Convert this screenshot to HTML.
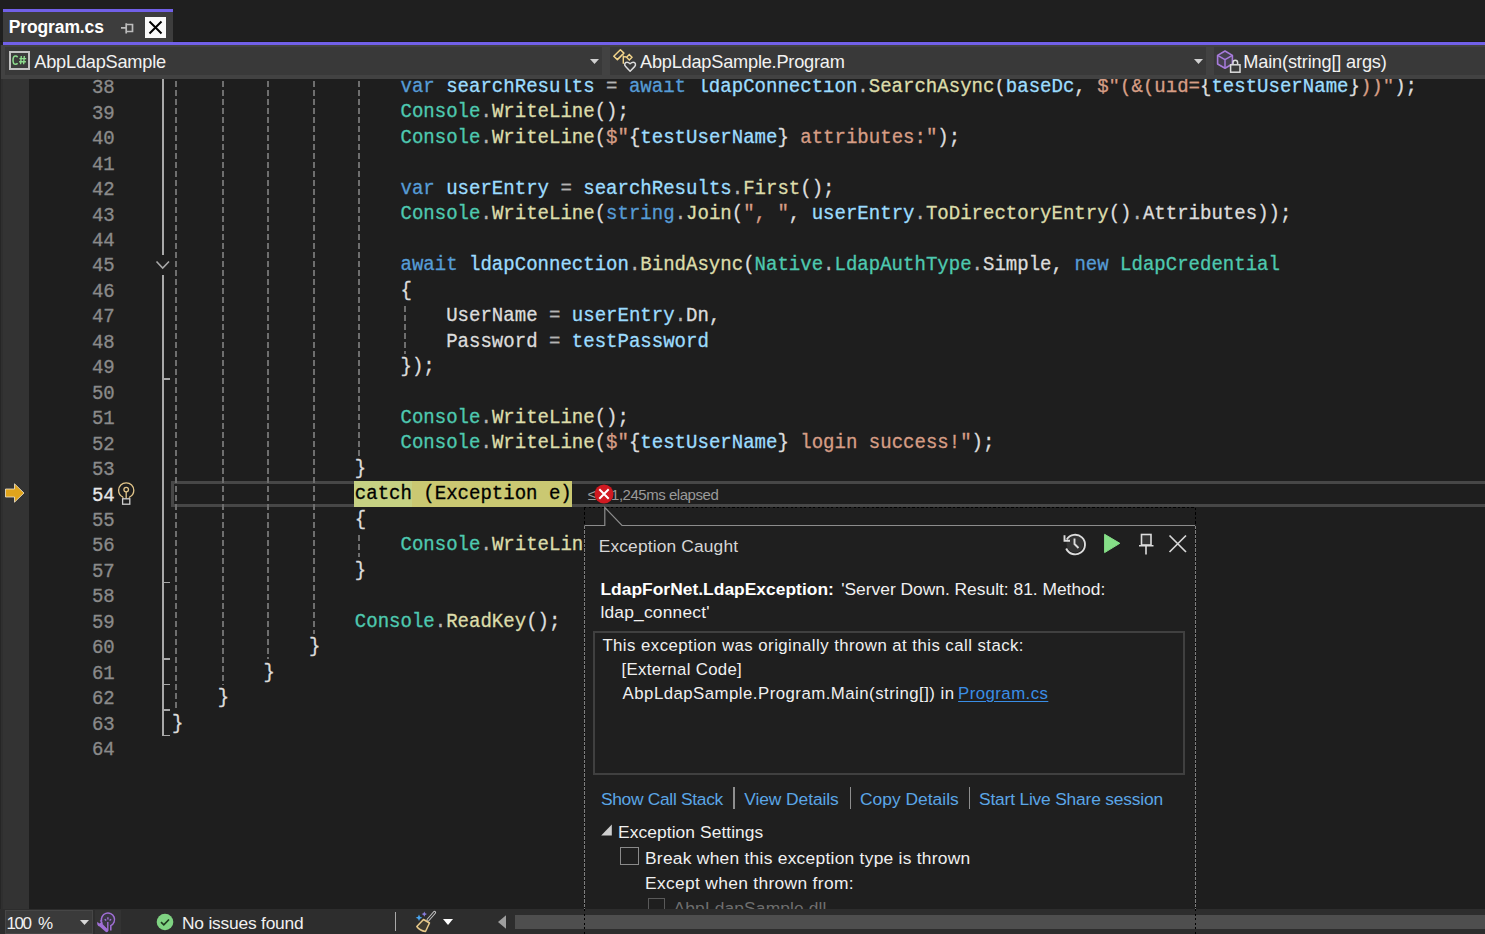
<!DOCTYPE html><html><head><meta charset="utf-8"><style>
html,body{margin:0;padding:0;width:1485px;height:934px;overflow:hidden;background:#1f1f1f;}
.r{position:absolute;}
.t{position:absolute;white-space:pre;font-family:"Liberation Sans",sans-serif;}
.m{position:absolute;white-space:pre;font-family:"Liberation Mono",monospace;transform:scaleY(1.04);transform-origin:0 14.60px;-webkit-text-stroke:0.3px currentColor}
svg{position:absolute;overflow:visible;}
</style></head><body>
<div class="r" style="left:0px;top:41px;width:1485px;height:1px;background:#19191a;"></div>
<div class="r" style="left:3px;top:9px;width:170px;height:3px;background:#7160e8;"></div>
<div class="r" style="left:3px;top:12px;width:170px;height:30px;background:#3d3d3d;"></div>
<div class="r" style="left:3px;top:42px;width:1482px;height:3px;background:#7160e8;"></div>
<div class="t" style="left:8.70px;top:19.19px;font-size:17.5px;line-height:17.5px;color:#ffffff;font-weight:bold;letter-spacing:-0.118px;">Program.cs</div>
<svg style="left:118px;top:20px" width="18" height="18" viewBox="0 0 18 18"><path d="M3 7.8H8M8.2 3.2V13.5M8.2 4.5H14.5V11.5H8.2" fill="none" stroke="#bcbcbc" stroke-width="1.7"/></svg>
<div class="r" style="left:145px;top:17px;width:21px;height:21px;background:#fafafa;"></div>
<svg style="left:145px;top:17px" width="21" height="21" viewBox="0 0 21 21"><path d="M4.5 4.5L16.5 16.5M16.5 4.5L4.5 16.5" stroke="#000" stroke-width="2"/></svg>
<div class="r" style="left:1px;top:45px;width:1484px;height:34px;background:#424242;"></div>
<div class="r" style="left:5px;top:47px;width:597px;height:28px;background:#393939;"></div>
<div class="r" style="left:610px;top:47px;width:596px;height:28px;background:#393939;"></div>
<div class="r" style="left:1214px;top:47px;width:271px;height:28px;background:#393939;"></div>
<div class="r" style="left:9px;top:51px;width:17px;height:15px;border:2px solid #c2c2c2;background:#3b3b3b"></div>
<svg style="left:9px;top:51px" width="21" height="19" viewBox="0 0 21 19"><path d="M8.6 6.2C8.1 5.5 7.4 5.1 6.6 5.1C5.1 5.1 4 6.6 4 9.2C4 11.8 5.1 13.3 6.6 13.3C7.4 13.3 8.1 12.9 8.6 12.2" fill="none" stroke="#8ddc8d" stroke-width="1.5"/><path d="M12.3 5L11.6 13.3M15.3 5L14.6 13.3M10.4 7.6H17.2M10.1 10.8H16.9" fill="none" stroke="#8ddc8d" stroke-width="1.4"/></svg>
<div class="t" style="left:34.30px;top:53.39px;font-size:18.2px;line-height:18.2px;color:#f2f2f2;font-weight:normal;letter-spacing:-0.223px;">AbpLdapSample</div>
<svg style="left:590.0px;top:58.5px" width="9" height="5" viewBox="0 0 9 5"><path d="M0 0H9L4.5 5Z" fill="#d0d0d0"/></svg>
<svg style="left:610px;top:45px" width="30" height="30" viewBox="0 0 30 30"><path d="M3.8 11.2L10.4 4.8L13.9 8.1L7.4 14.6Z" fill="none" stroke="#f2d48a" stroke-width="1.5" stroke-linejoin="round"/><path d="M13.2 11.8H16.5" stroke="#f2d48a" stroke-width="1.4"/><path d="M16.6 12.2L19.3 9.5L22 12.2L19.3 14.9Z" fill="none" stroke="#f2d48a" stroke-width="1.4"/><path d="M13.3 10.5V18.7" stroke="#f2d48a" stroke-width="1.4"/><path d="M20.1 26.2L15.6 21.6C14 20 14.6 17.2 17 17.2C18.4 17.2 20.1 18.8 20.1 18.8C20.1 18.8 21.8 17.2 23.2 17.2C25.6 17.2 26.2 20 24.6 21.6Z" fill="#3a3a3a" stroke="#dcdcdc" stroke-width="1.5" stroke-linejoin="round"/></svg>
<div class="t" style="left:640.00px;top:53.29px;font-size:18.2px;line-height:18.2px;color:#f2f2f2;font-weight:normal;letter-spacing:-0.222px;">AbpLdapSample.Program</div>
<svg style="left:1194.1px;top:58.5px" width="9" height="5" viewBox="0 0 9 5"><path d="M0 0H9L4.5 5Z" fill="#d0d0d0"/></svg>
<svg style="left:1210px;top:45px" width="32" height="30" viewBox="0 0 32 30"><path d="M15 6L7.6 10.4V19L15 23.2L22.4 19V10.4Z" fill="#45404f" stroke="#a77bdb" stroke-width="1.6" stroke-linejoin="round"/><path d="M7.6 10.4L15 14.6L22.4 10.4M15 14.6V23.2" fill="none" stroke="#a77bdb" stroke-width="1.5"/><rect x="20.6" y="19.8" width="9.4" height="7.4" fill="#3a3a3a" stroke="#dcdcdc" stroke-width="1.5"/><path d="M23 19.8V17.5C23 14.4 27.6 14.4 27.6 17.5V19.8" fill="none" stroke="#dcdcdc" stroke-width="1.5"/></svg>
<div class="t" style="left:1243.30px;top:52.79px;font-size:18.2px;line-height:18.2px;color:#f2f2f2;font-weight:normal;letter-spacing:-0.166px;">Main(string[] args)</div>
<div class="r" style="left:0px;top:45px;width:1px;height:1485px;background:#262626;"></div>
<div class="r" style="left:1px;top:79px;width:2px;height:830px;background:#2f2f2f;"></div>
<div class="r" style="left:3px;top:79px;width:26px;height:830px;background:#333333;"></div>
<div class="r" style="left:29px;top:79px;width:1456px;height:830px;background:#1e1e1e;"></div>
<div class="r" style="left:29px;top:79px;width:1456px;height:830px;overflow:hidden">
<div class="r" style="left:141.5px;top:402px;width:1319.5px;height:26px;background:transparent;border:3px solid #474747;box-sizing:border-box"></div>
<div class="r" style="left:325.2px;top:402px;width:58px;height:26px;background:#c6d183;"></div>
<div class="r" style="left:383.2px;top:402px;width:160px;height:26px;background:#cac872;"></div>
<div class="r" style="left:146px;top:2px;width:2px;height:629.1px;background:transparent;background:repeating-linear-gradient(to bottom,#6e6e6e 0,#6e6e6e 6px,transparent 6px,transparent 9px)"></div>
<div class="r" style="left:193px;top:2px;width:2px;height:603.6px;background:transparent;background:repeating-linear-gradient(to bottom,#6e6e6e 0,#6e6e6e 6px,transparent 6px,transparent 9px)"></div>
<div class="r" style="left:238px;top:2px;width:2px;height:578.2px;background:transparent;background:repeating-linear-gradient(to bottom,#6e6e6e 0,#6e6e6e 6px,transparent 6px,transparent 9px)"></div>
<div class="r" style="left:284px;top:2px;width:2px;height:552.7px;background:transparent;background:repeating-linear-gradient(to bottom,#6e6e6e 0,#6e6e6e 6px,transparent 6px,transparent 9px)"></div>
<div class="r" style="left:329px;top:2px;width:2px;height:374.5px;background:transparent;background:repeating-linear-gradient(to bottom,#6e6e6e 0,#6e6e6e 6px,transparent 6px,transparent 9px)"></div>
<div class="r" style="left:329px;top:456px;width:2px;height:22.3px;background:transparent;background:repeating-linear-gradient(to bottom,#6e6e6e 0,#6e6e6e 6px,transparent 6px,transparent 9px)"></div>
<div class="r" style="left:375px;top:227px;width:2px;height:47.7px;background:transparent;background:repeating-linear-gradient(to bottom,#6e6e6e 0,#6e6e6e 6px,transparent 6px,transparent 9px)"></div>
<div class="r" style="left:133px;top:0px;width:2px;height:176px;background:#a8a8a8;"></div>
<div class="r" style="left:133px;top:196px;width:2px;height:460.56000000000006px;background:#a8a8a8;"></div>
<div class="r" style="left:133px;top:299.1px;width:8px;height:1.5px;background:#a8a8a8;"></div>
<div class="r" style="left:133px;top:502.8px;width:8px;height:1.5px;background:#a8a8a8;"></div>
<div class="r" style="left:133px;top:579.2px;width:8px;height:1.5px;background:#a8a8a8;"></div>
<div class="r" style="left:133px;top:604.6px;width:8px;height:1.5px;background:#a8a8a8;"></div>
<div class="r" style="left:133px;top:630.1px;width:8px;height:1.5px;background:#a8a8a8;"></div>
<div class="r" style="left:133px;top:655.6px;width:8px;height:1.5px;background:#a8a8a8;"></div>
<svg style="left:127px;top:181px" width="14" height="10" viewBox="0 0 14 10"><path d="M0.5 1.5L6.7 8L13 1.5" fill="none" stroke="#a8a8a8" stroke-width="1.6"/></svg>
<div class="m" style="left:371.50px;top:-1.00px;font-size:19.0417px;line-height:19.0417px"><span style="color:#569CD6">var</span><span style="color:#DCDCDC"> </span><span style="color:#9CDCFE">searchResults</span><span style="color:#B4B4B4"> = </span><span style="color:#569CD6">await</span><span style="color:#DCDCDC"> </span><span style="color:#9CDCFE">ldapConnection</span><span style="color:#B4B4B4">.</span><span style="color:#DCDCAA">SearchAsync</span><span style="color:#DCDCDC">(</span><span style="color:#9CDCFE">baseDc</span><span style="color:#DCDCDC">, </span><span style="color:#D69D85">$"(&amp;(uid=</span><span style="color:#DCDCDC">{</span><span style="color:#9CDCFE">testUserName</span><span style="color:#DCDCDC">}</span><span style="color:#D69D85">))"</span><span style="color:#DCDCDC">);</span></div>
<div class="m" style="left:371.50px;top:24.46px;font-size:19.0417px;line-height:19.0417px"><span style="color:#4EC9B0">Console</span><span style="color:#B4B4B4">.</span><span style="color:#DCDCAA">WriteLine</span><span style="color:#DCDCDC">();</span></div>
<div class="m" style="left:371.50px;top:49.92px;font-size:19.0417px;line-height:19.0417px"><span style="color:#4EC9B0">Console</span><span style="color:#B4B4B4">.</span><span style="color:#DCDCAA">WriteLine</span><span style="color:#DCDCDC">(</span><span style="color:#D69D85">$"</span><span style="color:#DCDCDC">{</span><span style="color:#9CDCFE">testUserName</span><span style="color:#DCDCDC">}</span><span style="color:#D69D85"> attributes:"</span><span style="color:#DCDCDC">);</span></div>
<div class="m" style="left:371.50px;top:100.84px;font-size:19.0417px;line-height:19.0417px"><span style="color:#569CD6">var</span><span style="color:#DCDCDC"> </span><span style="color:#9CDCFE">userEntry</span><span style="color:#B4B4B4"> = </span><span style="color:#9CDCFE">searchResults</span><span style="color:#B4B4B4">.</span><span style="color:#DCDCAA">First</span><span style="color:#DCDCDC">();</span></div>
<div class="m" style="left:371.50px;top:126.30px;font-size:19.0417px;line-height:19.0417px"><span style="color:#4EC9B0">Console</span><span style="color:#B4B4B4">.</span><span style="color:#DCDCAA">WriteLine</span><span style="color:#DCDCDC">(</span><span style="color:#569CD6">string</span><span style="color:#B4B4B4">.</span><span style="color:#DCDCAA">Join</span><span style="color:#DCDCDC">(</span><span style="color:#D69D85">", "</span><span style="color:#DCDCDC">, </span><span style="color:#9CDCFE">userEntry</span><span style="color:#B4B4B4">.</span><span style="color:#DCDCAA">ToDirectoryEntry</span><span style="color:#DCDCDC">()</span><span style="color:#B4B4B4">.</span><span style="color:#DCDCDC">Attributes</span><span style="color:#DCDCDC">));</span></div>
<div class="m" style="left:371.50px;top:177.22px;font-size:19.0417px;line-height:19.0417px"><span style="color:#569CD6">await</span><span style="color:#DCDCDC"> </span><span style="color:#9CDCFE">ldapConnection</span><span style="color:#B4B4B4">.</span><span style="color:#DCDCAA">BindAsync</span><span style="color:#DCDCDC">(</span><span style="color:#4EC9B0">Native</span><span style="color:#B4B4B4">.</span><span style="color:#4EC9B0">LdapAuthType</span><span style="color:#B4B4B4">.</span><span style="color:#DCDCDC">Simple</span><span style="color:#DCDCDC">, </span><span style="color:#569CD6">new</span><span style="color:#DCDCDC"> </span><span style="color:#4EC9B0">LdapCredential</span></div>
<div class="m" style="left:371.50px;top:202.68px;font-size:19.0417px;line-height:19.0417px"><span style="color:#DCDCDC">{</span></div>
<div class="m" style="left:417.20px;top:228.14px;font-size:19.0417px;line-height:19.0417px"><span style="color:#DCDCDC">UserName</span><span style="color:#B4B4B4"> = </span><span style="color:#9CDCFE">userEntry</span><span style="color:#B4B4B4">.</span><span style="color:#DCDCDC">Dn</span><span style="color:#DCDCDC">,</span></div>
<div class="m" style="left:417.20px;top:253.60px;font-size:19.0417px;line-height:19.0417px"><span style="color:#DCDCDC">Password</span><span style="color:#B4B4B4"> = </span><span style="color:#9CDCFE">testPassword</span></div>
<div class="m" style="left:371.50px;top:279.06px;font-size:19.0417px;line-height:19.0417px"><span style="color:#DCDCDC">});</span></div>
<div class="m" style="left:371.50px;top:329.98px;font-size:19.0417px;line-height:19.0417px"><span style="color:#4EC9B0">Console</span><span style="color:#B4B4B4">.</span><span style="color:#DCDCAA">WriteLine</span><span style="color:#DCDCDC">();</span></div>
<div class="m" style="left:371.50px;top:355.44px;font-size:19.0417px;line-height:19.0417px"><span style="color:#4EC9B0">Console</span><span style="color:#B4B4B4">.</span><span style="color:#DCDCAA">WriteLine</span><span style="color:#DCDCDC">(</span><span style="color:#D69D85">$"</span><span style="color:#DCDCDC">{</span><span style="color:#9CDCFE">testUserName</span><span style="color:#DCDCDC">}</span><span style="color:#D69D85"> login success!"</span><span style="color:#DCDCDC">);</span></div>
<div class="m" style="left:325.80px;top:380.90px;font-size:19.0417px;line-height:19.0417px"><span style="color:#DCDCDC">}</span></div>
<div class="m" style="left:325.80px;top:406.36px;font-size:19.0417px;line-height:19.0417px"><span style="color:#000">catch</span><span style="color:#000"> (Exception e)</span></div>
<div class="m" style="left:325.80px;top:431.82px;font-size:19.0417px;line-height:19.0417px"><span style="color:#DCDCDC">{</span></div>
<div class="m" style="left:371.50px;top:457.28px;font-size:19.0417px;line-height:19.0417px"><span style="color:#4EC9B0">Console</span><span style="color:#B4B4B4">.</span><span style="color:#DCDCAA">WriteLin</span></div>
<div class="m" style="left:325.80px;top:482.74px;font-size:19.0417px;line-height:19.0417px"><span style="color:#DCDCDC">}</span></div>
<div class="m" style="left:325.80px;top:533.66px;font-size:19.0417px;line-height:19.0417px"><span style="color:#4EC9B0">Console</span><span style="color:#B4B4B4">.</span><span style="color:#DCDCAA">ReadKey</span><span style="color:#DCDCDC">();</span></div>
<div class="m" style="left:280.10px;top:559.12px;font-size:19.0417px;line-height:19.0417px"><span style="color:#DCDCDC">}</span></div>
<div class="m" style="left:234.40px;top:584.58px;font-size:19.0417px;line-height:19.0417px"><span style="color:#DCDCDC">}</span></div>
<div class="m" style="left:188.70px;top:610.04px;font-size:19.0417px;line-height:19.0417px"><span style="color:#DCDCDC">}</span></div>
<div class="m" style="left:143.00px;top:635.50px;font-size:19.0417px;line-height:19.0417px"><span style="color:#DCDCDC">}</span></div>
</div>
<div class="r" style="left:0;top:79px;width:160px;height:830px;overflow:hidden">
<div class="m" style="left:91.95px;top:0.20px;font-size:19.0417px;line-height:19.0417px;color:#8a8a8a">38</div>
<div class="m" style="left:91.95px;top:25.66px;font-size:19.0417px;line-height:19.0417px;color:#8a8a8a">39</div>
<div class="m" style="left:91.95px;top:51.12px;font-size:19.0417px;line-height:19.0417px;color:#8a8a8a">40</div>
<div class="m" style="left:91.95px;top:76.58px;font-size:19.0417px;line-height:19.0417px;color:#8a8a8a">41</div>
<div class="m" style="left:91.95px;top:102.04px;font-size:19.0417px;line-height:19.0417px;color:#8a8a8a">42</div>
<div class="m" style="left:91.95px;top:127.50px;font-size:19.0417px;line-height:19.0417px;color:#8a8a8a">43</div>
<div class="m" style="left:91.95px;top:152.96px;font-size:19.0417px;line-height:19.0417px;color:#8a8a8a">44</div>
<div class="m" style="left:91.95px;top:178.42px;font-size:19.0417px;line-height:19.0417px;color:#8a8a8a">45</div>
<div class="m" style="left:91.95px;top:203.88px;font-size:19.0417px;line-height:19.0417px;color:#8a8a8a">46</div>
<div class="m" style="left:91.95px;top:229.34px;font-size:19.0417px;line-height:19.0417px;color:#8a8a8a">47</div>
<div class="m" style="left:91.95px;top:254.80px;font-size:19.0417px;line-height:19.0417px;color:#8a8a8a">48</div>
<div class="m" style="left:91.95px;top:280.26px;font-size:19.0417px;line-height:19.0417px;color:#8a8a8a">49</div>
<div class="m" style="left:91.95px;top:305.72px;font-size:19.0417px;line-height:19.0417px;color:#8a8a8a">50</div>
<div class="m" style="left:91.95px;top:331.18px;font-size:19.0417px;line-height:19.0417px;color:#8a8a8a">51</div>
<div class="m" style="left:91.95px;top:356.64px;font-size:19.0417px;line-height:19.0417px;color:#8a8a8a">52</div>
<div class="m" style="left:91.95px;top:382.10px;font-size:19.0417px;line-height:19.0417px;color:#8a8a8a">53</div>
<div class="m" style="left:91.95px;top:407.56px;font-size:19.0417px;line-height:19.0417px;color:#e8e8e8">54</div>
<div class="m" style="left:91.95px;top:433.02px;font-size:19.0417px;line-height:19.0417px;color:#8a8a8a">55</div>
<div class="m" style="left:91.95px;top:458.48px;font-size:19.0417px;line-height:19.0417px;color:#8a8a8a">56</div>
<div class="m" style="left:91.95px;top:483.94px;font-size:19.0417px;line-height:19.0417px;color:#8a8a8a">57</div>
<div class="m" style="left:91.95px;top:509.40px;font-size:19.0417px;line-height:19.0417px;color:#8a8a8a">58</div>
<div class="m" style="left:91.95px;top:534.86px;font-size:19.0417px;line-height:19.0417px;color:#8a8a8a">59</div>
<div class="m" style="left:91.95px;top:560.32px;font-size:19.0417px;line-height:19.0417px;color:#8a8a8a">60</div>
<div class="m" style="left:91.95px;top:585.78px;font-size:19.0417px;line-height:19.0417px;color:#8a8a8a">61</div>
<div class="m" style="left:91.95px;top:611.24px;font-size:19.0417px;line-height:19.0417px;color:#8a8a8a">62</div>
<div class="m" style="left:91.95px;top:636.70px;font-size:19.0417px;line-height:19.0417px;color:#8a8a8a">63</div>
<div class="m" style="left:91.95px;top:662.16px;font-size:19.0417px;line-height:19.0417px;color:#8a8a8a">64</div>
</div>
<svg style="left:4px;top:482px" width="22" height="22" viewBox="0 0 22 22"><path d="M1.5 7H10.5V1.8L20 11L10.5 20.2V15H1.5Z" fill="#e0a41c" stroke="#f0e6d0" stroke-width="0.8"/></svg>
<svg style="left:116px;top:481px" width="20" height="26" viewBox="0 0 20 26"><path d="M7 16.2C4.4 14.9 2.6 12.3 2.6 9.3C2.6 5.1 5.9 1.8 10.2 1.8C14.5 1.8 17.8 5.1 17.8 9.3C17.8 12.3 16 14.9 13.4 16.2" fill="none" stroke="#e2c58a" stroke-width="1.3"/><path d="M7 16.2V17.5M13.4 16.2V17.5" stroke="#e2c58a" stroke-width="1.3"/><circle cx="10.2" cy="8.6" r="2.3" fill="none" stroke="#e2c58a" stroke-width="1.3"/><path d="M10.2 10.9V17.6" stroke="#e2c58a" stroke-width="1.3"/><rect x="6.6" y="17.8" width="7.2" height="5.4" fill="none" stroke="#cfcfcf" stroke-width="1.3"/></svg>
<div class="t" style="left:587.80px;top:486.76px;font-size:15.4px;line-height:15.4px;color:#9a9a9a;font-weight:normal;letter-spacing:0.000px;">≤</div>
<div class="t" style="left:611.00px;top:487.10px;font-size:15px;line-height:15px;color:#9a9a9a;font-weight:normal;letter-spacing:-0.464px;">1,245ms elapsed</div>
<svg style="left:594px;top:484px" width="20" height="20" viewBox="0 0 20 20"><circle cx="10" cy="10" r="9.5" fill="#d11a22"/><path d="M5.3 5.3L14.7 14.7M14.7 5.3L5.3 14.7" stroke="#fff" stroke-width="2"/></svg>
<div class="r" style="left:585px;top:508px;width:610px;height:426px;background:#1f1f1f;"></div>
<div class="r" style="left:584px;top:507px;width:612px;height:1px;background:transparent;background:repeating-linear-gradient(to right,#000 0,#000 2px,transparent 2px,transparent 4.5px)"></div>
<div class="r" style="left:584px;top:508px;width:1px;height:18px;background:transparent;background:repeating-linear-gradient(to bottom,#000 0,#000 2px,transparent 2px,transparent 4.5px)"></div>
<div class="r" style="left:584px;top:526px;width:1px;height:408px;background:transparent;background:repeating-linear-gradient(to bottom,#7c7c7c 0,#7c7c7c 3.4px,#050505 3.4px,#050505 4.5px)"></div>
<div class="r" style="left:1195px;top:508px;width:1px;height:18px;background:transparent;background:repeating-linear-gradient(to bottom,#000 0,#000 2px,transparent 2px,transparent 4.5px)"></div>
<div class="r" style="left:1195px;top:526px;width:1px;height:408px;background:transparent;background:repeating-linear-gradient(to bottom,#7c7c7c 0,#7c7c7c 3.4px,#050505 3.4px,#050505 4.5px)"></div>
<svg style="left:584px;top:506px" width="612" height="22" viewBox="0 0 612 22"><path d="M0.5 19.5H20.8V1.5L38 19.5H611" fill="none" stroke="#8c8c8c" stroke-width="1.2"/></svg>
<div class="r" style="left:585px;top:526px;width:610px;height:1px;background:transparent;"></div>
<div class="t" style="left:598.70px;top:538.17px;font-size:17.4px;line-height:17.4px;color:#d6d6d6;font-weight:normal;letter-spacing:0.137px;">Exception Caught</div>
<svg style="left:1062px;top:532px" width="26" height="24" viewBox="0 0 26 24"><path d="M4.5 12A8.5 8.5 0 0 1 21.5 12A8.5 8.5 0 0 1 4.5 12Z" fill="#333"/><path d="M4.8 7.5A9.8 9.8 0 1 1 4.2 16.5" fill="none" stroke="#dcdcdc" stroke-width="1.9"/><path d="M2.5 3.2V8.8H8" fill="none" stroke="#dcdcdc" stroke-width="1.9"/><path d="M12.5 6.5V12L16.5 16" fill="none" stroke="#dcdcdc" stroke-width="1.9"/></svg>
<svg style="left:1103px;top:533px" width="18" height="21" viewBox="0 0 18 21"><path d="M1.6 1.3L16.8 10.3L1.6 19.6Z" fill="#86df88" stroke="#86df88" stroke-width="1" stroke-linejoin="round"/></svg>
<svg style="left:1138px;top:532px" width="17" height="24" viewBox="0 0 17 24"><rect x="3.5" y="2.5" width="9.5" height="10.5" fill="#333" stroke="#dcdcdc" stroke-width="1.6"/><path d="M1 13.8H15.5M8 14V22.5" stroke="#dcdcdc" stroke-width="1.6"/></svg>
<svg style="left:1167px;top:533px" width="22" height="22" viewBox="0 0 22 22"><path d="M2.5 2.5L19 19M19 2.5L2.5 19" stroke="#d8d8d8" stroke-width="1.7"/></svg>
<div class="t" style="left:600.40px;top:581.27px;font-size:17.4px;line-height:17.4px;color:#ffffff;font-weight:bold;letter-spacing:0.027px;">LdapForNet.LdapException:</div>
<div class="t" style="left:841.20px;top:581.27px;font-size:17.4px;line-height:17.4px;color:#f0f0f0;font-weight:normal;letter-spacing:-0.008px;">'Server Down. Result: 81. Method:</div>
<div class="t" style="left:600.40px;top:604.17px;font-size:17.4px;line-height:17.4px;color:#f0f0f0;font-weight:normal;letter-spacing:0.195px;">ldap_connect'</div>
<div class="r" style="left:593px;top:631px;width:592px;height:144px;background:transparent;border:2px solid #404040;box-sizing:border-box"></div>
<div class="t" style="left:602.40px;top:637.88px;font-size:16.8px;line-height:16.8px;color:#f0f0f0;font-weight:normal;letter-spacing:0.450px;">This exception was originally thrown at this call stack:</div>
<div class="t" style="left:621.60px;top:661.78px;font-size:16.8px;line-height:16.8px;color:#f0f0f0;font-weight:normal;letter-spacing:0.321px;">[External Code]</div>
<div class="t" style="left:622.60px;top:686.08px;font-size:16.8px;line-height:16.8px;color:#f0f0f0;font-weight:normal;letter-spacing:0.475px;">AbpLdapSample.Program.Main(string[]) in</div>
<div class="t" style="left:958.10px;top:686.08px;font-size:16.8px;line-height:16.8px;color:#3a8ee6;font-weight:normal;letter-spacing:0.444px;text-decoration:underline;text-underline-offset:2px">Program.cs</div>
<div class="t" style="left:600.90px;top:790.77px;font-size:17.4px;line-height:17.4px;color:#5ba6e6;font-weight:normal;letter-spacing:-0.302px;">Show Call Stack</div>
<div class="t" style="left:744.20px;top:790.77px;font-size:17.4px;line-height:17.4px;color:#5ba6e6;font-weight:normal;letter-spacing:-0.070px;">View Details</div>
<div class="t" style="left:860.00px;top:790.77px;font-size:17.4px;line-height:17.4px;color:#5ba6e6;font-weight:normal;letter-spacing:0.010px;">Copy Details</div>
<div class="t" style="left:979.00px;top:790.77px;font-size:17.4px;line-height:17.4px;color:#5ba6e6;font-weight:normal;letter-spacing:-0.192px;">Start Live Share session</div>
<div class="r" style="left:733px;top:786.5px;width:1.5px;height:22.5px;background:#8e8e8e;"></div>
<div class="r" style="left:849.5px;top:786.5px;width:1.5px;height:22.5px;background:#8e8e8e;"></div>
<div class="r" style="left:968.7px;top:786.5px;width:1.5px;height:22.5px;background:#8e8e8e;"></div>
<svg style="left:600px;top:823px" width="13" height="14" viewBox="0 0 13 14"><path d="M11.8 1.5V12.5H1.2Z" fill="#cfcfcf"/></svg>
<div class="t" style="left:618.10px;top:824.07px;font-size:17.4px;line-height:17.4px;color:#f0f0f0;font-weight:normal;letter-spacing:0.068px;">Exception Settings</div>
<div class="r" style="left:620px;top:847px;width:18.5px;height:17.5px;background:transparent;border:1.5px solid #8a8a8a;box-sizing:border-box"></div>
<div class="t" style="left:645.00px;top:849.87px;font-size:17.4px;line-height:17.4px;color:#f0f0f0;font-weight:normal;letter-spacing:0.260px;">Break when this exception type is thrown</div>
<div class="t" style="left:645.00px;top:874.97px;font-size:17.4px;line-height:17.4px;color:#f0f0f0;font-weight:normal;letter-spacing:0.325px;">Except when thrown from:</div>
<div class="r" style="left:647.5px;top:898px;width:17.5px;height:17.5px;background:transparent;border:1.5px solid #5a5a5a;box-sizing:border-box"></div>
<div class="t" style="left:673.60px;top:900.27px;font-size:17.4px;line-height:17.4px;color:#6e6e6e;font-weight:normal;letter-spacing:0.127px;">AbpLdapSample.dll</div>
<div class="r" style="left:0px;top:909px;width:1485px;height:25px;background:#2d2d2d;"></div>
<div class="r" style="left:4.5px;top:910px;width:88px;height:24px;background:#3a3a3a;border:1px solid #464646;box-sizing:border-box"></div>
<div class="t" style="left:6.40px;top:914.81px;font-size:17px;line-height:17px;color:#f0f0f0;font-weight:normal;letter-spacing:-1.405px;">100</div>
<div class="t" style="left:38.10px;top:914.81px;font-size:17px;line-height:17px;color:#f0f0f0;font-weight:normal;letter-spacing:0.000px;">%</div>
<svg style="left:80.0px;top:920.3px" width="9" height="5" viewBox="0 0 9 5"><path d="M0 0H9L4.5 5Z" fill="#d8d8d8"/></svg>
<div class="r" style="left:94.5px;top:910px;width:26px;height:24px;background:#333333;"></div>
<svg style="left:96px;top:912px" width="22" height="21" viewBox="0 0 22 21"><circle cx="11.9" cy="7.9" r="6.4" fill="#3a3744"/><path d="M5.6 9.4A6.6 6.6 0 1 1 14.8 13.6V18.6" fill="none" stroke="#a06fd6" stroke-width="1.5"/><path d="M11.9 5.2V7.6M8.7 7.2L10.2 8.6M15.1 7.2L13.6 8.6M11.8 10V18.6" stroke="#a06fd6" stroke-width="1.4"/><path d="M1.5 9.8C0.6 12 1.6 14.2 3.6 14.6L9.6 19.8C10.3 20.4 11.4 20.3 12 19.6C12.5 18.9 12.4 17.9 11.7 17.3L6.8 12.2C7 10.2 5.8 8.4 3.8 7.9L4.8 10.8L3.2 11.6Z" fill="#a06fd6"/></svg>
<svg style="left:156px;top:913px" width="18" height="18" viewBox="0 0 18 18"><circle cx="9" cy="9" r="8.3" fill="#7fd382"/><path d="M5 9.2L7.8 11.8L13 6.5" fill="none" stroke="#1f3a1f" stroke-width="1.7"/></svg>
<div class="t" style="left:182.00px;top:914.97px;font-size:17.4px;line-height:17.4px;color:#f0f0f0;font-weight:normal;letter-spacing:-0.217px;">No issues found</div>
<div class="r" style="left:395px;top:912px;width:1.2px;height:19px;background:#a8a8a8;"></div>
<svg style="left:415px;top:910px" width="24" height="23" viewBox="0 0 24 23"><path d="M4 4.5L5 6.8L7.3 7.8L5 8.8L4 11L3 8.8L0.7 7.8L3 6.8Z" fill="#4aa6f0"/><path d="M9.3 1.5L10.1 3.3L12 4.1L10.1 4.9L9.3 6.7L8.5 4.9L6.6 4.1L8.5 3.3Z" fill="#8a7ee0"/><path d="M13 10L19.5 2.5" stroke="#c8c8c8" stroke-width="3.2" stroke-linecap="round"/><path d="M13 10L19.5 2.5" stroke="#333" stroke-width="1.2" stroke-linecap="round"/><path d="M8.5 9.5L14.5 13L10.5 21.5C7 21 3.5 19 1.8 16.5Z" fill="#3e3a30" stroke="#e8c98a" stroke-width="1.5" stroke-linejoin="round"/></svg>
<svg style="left:442.9px;top:918.8px" width="10" height="6" viewBox="0 0 10 6"><path d="M0 0H10L5.0 6Z" fill="#ffffff"/></svg>
<svg style="left:497px;top:914px" width="10" height="16" viewBox="0 0 10 16"><path d="M9 1.2V14.8L1 8Z" fill="#9e9e9e"/></svg>
<div class="r" style="left:515.2px;top:915px;width:969.8px;height:14px;background:#4e4e4e;"></div>
<div class="r" style="left:584px;top:909px;width:1px;height:25px;background:transparent;background:repeating-linear-gradient(to bottom,#000 0,#000 2px,transparent 2px,transparent 4.5px)"></div>
<div class="r" style="left:1195px;top:909px;width:1px;height:25px;background:transparent;background:repeating-linear-gradient(to bottom,#000 0,#000 2px,transparent 2px,transparent 4.5px)"></div>
</body></html>
